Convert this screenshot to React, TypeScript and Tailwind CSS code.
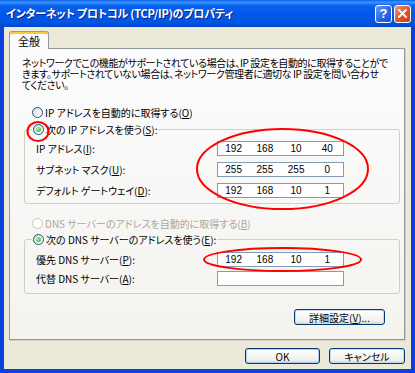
import type { ReactNode } from "react";

const JP = "font-['Noto_Sans_CJK_JP',sans-serif] [font-feature-settings:'palt']";

function Radio({ checked = false, disabled = false }: { checked?: boolean; disabled?: boolean }) {
  return (
    <span
      className={
        disabled
          ? "flex h-[11px] w-[11px] shrink-0 items-center justify-center rounded-full border border-[#cac8bb] bg-white"
          : "flex h-[11px] w-[11px] shrink-0 items-center justify-center rounded-full border border-[#1c5180] bg-[linear-gradient(135deg,#dcdcd7,#ffffff)]"
      }
    >
      {checked && (
        <span className="h-[5px] w-[5px] rounded-full bg-[radial-gradient(circle_at_35%_35%,#b4f5a4,#1f9e1f)]" />
      )}
    </span>
  );
}

function Key({ k }: { k: string }) {
  return (
    <>
      (<u className="underline-offset-1">{k}</u>)
    </>
  );
}

function IpField({ parts }: { parts?: string[] }) {
  return (
    <div className="flex h-[15px] w-[127px] shrink-0 items-center border border-[#7f9db9] bg-white font-['Liberation_Sans',Arial,sans-serif] text-[10px] text-black">
      {parts?.map((p, i) => (
        <span key={i} className="flex-1 text-center">
          {p}
        </span>
      ))}
    </div>
  );
}

function FieldRow({ label, parts }: { label: ReactNode; parts?: string[] }) {
  return (
    <div className="flex items-center">
      <span className="w-[181px] shrink-0 whitespace-nowrap">{label}</span>
      <IpField parts={parts} />
    </div>
  );
}

function XpButton({ children, width, isDefault = false }: { children: ReactNode; width: string; isDefault?: boolean }) {
  return (
    <button
      className={`${width} flex h-[16px] items-center justify-center rounded-[3px] border border-[#003c74] bg-[linear-gradient(to_bottom,#ffffff,#f0f0ea_80%,#d6d0c5)] text-[10px] text-black ${
        isDefault ? "shadow-[inset_0_0_0_1px_#aecbf5]" : "shadow-[inset_0_0_0_1px_#c8d9f3]"
      }`}
    >
      {children}
    </button>
  );
}

export default function App() {
  return (
    <div className={`relative flex h-[373px] w-[415px] flex-col bg-[#0842da] px-[4px] pb-[4px] ${JP}`}>
      {/* title bar */}
      <div className="-mx-[4px] flex h-[27px] shrink-0 items-center bg-[linear-gradient(to_bottom,#0a5ee9_0%,#3d95ff_8%,#0b64ef_20%,#0058e6_50%,#0056e6_80%,#0049c9_100%)] pl-[6px] pr-[4px]">
        <span className="flex-1 whitespace-nowrap text-[11px] font-bold tracking-[-0.2px] text-white [text-shadow:1px_1px_0_#0a1f8a]">
          インターネット プロトコル (TCP/IP)のプロパティ
        </span>
        <div className="flex gap-[2px]">
          <div className="flex h-[18px] w-[17px] items-center justify-center rounded-[3px] border border-white bg-[linear-gradient(135deg,#6a9bf8,#2a62e0_60%,#1c4fcc)] font-['Liberation_Sans',sans-serif] text-[13px] font-bold leading-none text-white">
            ?
          </div>
          <div className="flex h-[18px] w-[17px] items-center justify-center rounded-[3px] border border-white bg-[linear-gradient(135deg,#f0987a,#e1522a_55%,#c93c14)]">
            <svg width="9" height="9" viewBox="0 0 9 9">
              <path d="M1 1 L8 8 M8 1 L1 8" stroke="#ffffff" strokeWidth="1.8" strokeLinecap="round" />
            </svg>
          </div>
        </div>
      </div>

      {/* body */}
      <div className="flex flex-1 flex-col bg-[#ece9d8] pl-[5px] pr-[6px] pt-[4px] text-[10px] text-black">
        <div className="flex">
          <div className="relative z-10 -mb-[1px] flex h-[18px] w-[40px] items-center justify-center rounded-t-[3px] border border-b-0 border-[#919b9c] border-t-[#e68b2c] bg-[#fcfcfe] pt-[2px] text-[11px] shadow-[inset_0_2px_0_#ffc73c]">
            全般
          </div>
        </div>
        <div className="flex h-[292px] flex-col border border-[#919b9c] bg-[linear-gradient(to_bottom,#fcfcfe,#f4f3ee)] px-[12px] pt-[8px] shadow-[1px_1px_0_#d3d1c6]">
          <p className="whitespace-nowrap leading-[11px] tracking-[-0.4px]">
            ネットワークでこの機能がサポートされている場合は、IP 設定を自動的に取得することがで
            <br />
            きます。サポートされていない場合は、ネットワーク管理者に適切な IP 設定を問い合わせ
            <br />
            てください。
          </p>

          <div className="ml-[10px] mt-[16px] flex h-[12px] items-center gap-[2px]">
            <Radio />
            <span className="whitespace-nowrap">
              IP アドレスを自動的に取得する<Key k="O" />
            </span>
          </div>

          <fieldset className="ml-[2px] mt-[5px] w-[376px] rounded-[3px] border border-[#d0d0bf] px-[11px] pb-[5px]">
            <legend className="-ml-[4px] flex h-[12px] items-center gap-[2px] px-[1px]">
              <Radio checked />
              <span className="whitespace-nowrap">
                次の IP アドレスを使う<Key k="S" />:
              </span>
            </legend>
            <div className="flex flex-col gap-[6px] pt-[6px]">
              <FieldRow label={<>IP アドレス<Key k="I" />:</>} parts={["192", "168", "10", "40"]} />
              <FieldRow label={<>サブネット マスク<Key k="U" />:</>} parts={["255", "255", "255", "0"]} />
              <FieldRow label={<>デフォルト ゲートウェイ<Key k="D" />:</>} parts={["192", "168", "10", "1"]} />
            </div>
          </fieldset>

          <div className="ml-[10px] mt-[13px] flex h-[12px] items-center gap-[2px] text-[#aca899]">
            <Radio disabled />
            <span className="whitespace-nowrap">
              DNS サーバーのアドレスを自動的に取得する<Key k="B" />
            </span>
          </div>

          <fieldset className="ml-[2px] mt-[4px] w-[376px] rounded-[3px] border border-[#d0d0bf] px-[11px] pb-[7px]">
            <legend className="-ml-[4px] flex h-[12px] items-center gap-[2px] px-[1px]">
              <Radio checked />
              <span className="whitespace-nowrap">
                次の DNS サーバーのアドレスを使う<Key k="E" />:
              </span>
            </legend>
            <div className="flex flex-col gap-[4px] pt-[7px]">
              <FieldRow label={<>優先 DNS サーバー<Key k="P" />:</>} parts={["192", "168", "10", "1"]} />
              <FieldRow label={<>代替 DNS サーバー<Key k="A" />:</>} />
            </div>
          </fieldset>

          <div className="mr-[7px] mt-[15px] flex justify-end">
            <XpButton width="w-[91px]">
              詳細設定<Key k="V" />...
            </XpButton>
          </div>
        </div>

        <div className="mt-[8px] flex justify-end gap-[9px]">
          <XpButton width="w-[75px]" isDefault>
            OK
          </XpButton>
          <XpButton width="w-[76px]">キャンセル</XpButton>
        </div>
      </div>

      {/* red annotation marks */}
      <svg className="pointer-events-none absolute inset-0" width="415" height="373" viewBox="0 0 415 373">
        <g fill="none" stroke="#ff0000" strokeWidth="2">
          <ellipse cx="38" cy="131.5" rx="10.5" ry="9.5" />
          <ellipse cx="282.5" cy="169" rx="85.5" ry="40" />
          <ellipse cx="282.5" cy="259.5" rx="78.5" ry="11.5" />
        </g>
      </svg>
    </div>
  );
}
